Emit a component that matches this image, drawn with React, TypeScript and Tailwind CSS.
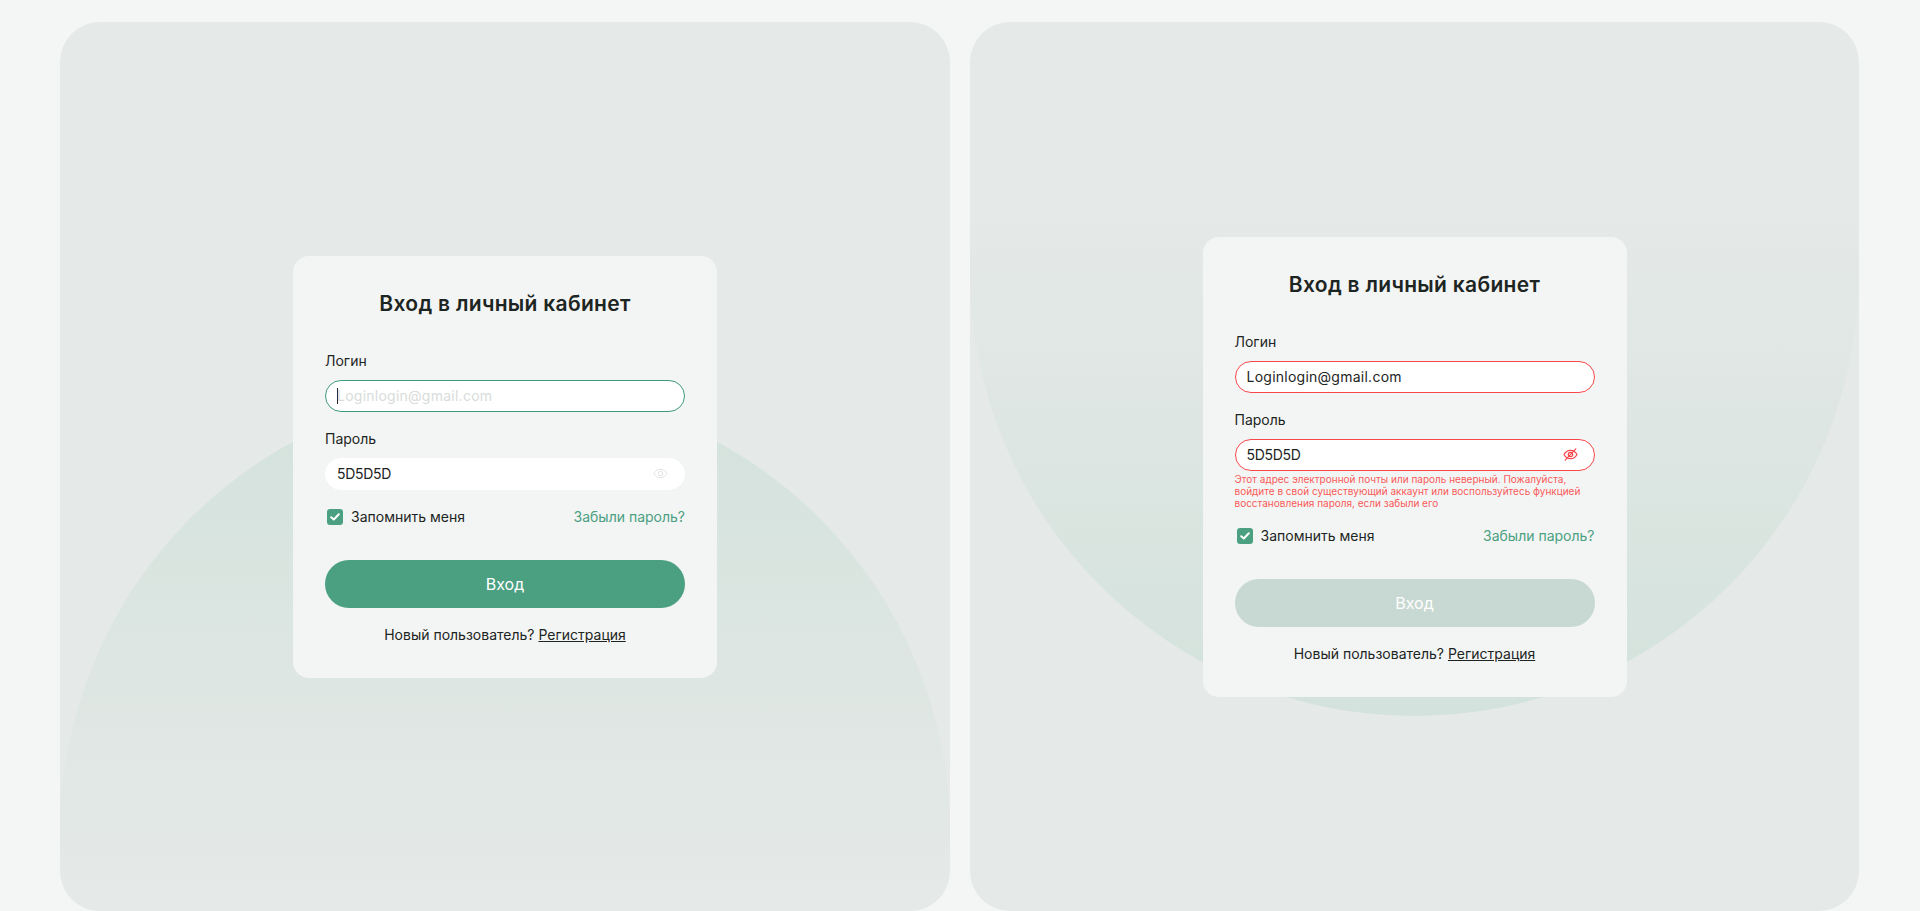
const font = { fontFamily: 'Inter, sans-serif' };

function EyeIcon({ off }: { off?: boolean }) {
  const color = off ? '#f7474b' : '#dfe3e1';
  return (
    <svg width="15" height="15" viewBox="0 0 15 15" fill="none" stroke={color} strokeWidth={off ? 1.2 : 1}>
      <path d="M1 7.500c1.500-2.800 3.700-4.200 6.500-4.200s5 1.400 6.500 4.200c-1.500 2.800-3.700 4.200-6.500 4.200S2.500 10.300 1 7.500Z" />
      <circle cx="7.500" cy="7.500" r="2.200" />
      {off && <path d="M12.800 1.800 2.200 13.200" strokeLinecap="round" />}
    </svg>
  );
}

function Check() {
  return (
    <span className="flex h-4 w-4 items-center justify-center rounded-[3px] bg-[#4ba082]">
      <svg width="10" height="8" viewBox="0 0 10 8" fill="none" stroke="#fff" strokeWidth="2" strokeLinecap="round" strokeLinejoin="round">
        <path d="M1.200 4.200 3.800 6.500 8.800 1.300" />
      </svg>
    </span>
  );
}

function LoginCard({ error }: { error?: boolean }) {
  return (
    <div className="relative flex w-[424px] flex-col rounded-2xl bg-[#f3f5f4] px-8 pt-[34px] pb-[33px] text-[#1d2523]">
      <h1 className="text-center text-[21px] leading-7 font-semibold tracking-[0.3px]">Вход в личный кабинет</h1>

      <label className="mt-[33px] text-[14px] leading-5">Логин</label>
      <div
        className={
          'mt-[9px] flex h-8 items-center rounded-full border bg-white px-[11px] text-[14px] tracking-[0.25px] ' +
          (error ? 'border-[#f7474b]' : 'border-[#3f9a7a]')
        }
      >
        {error ? (
          <span>Loginlogin@gmail.com</span>
        ) : (
          <>
            <span className="h-4 w-px bg-[#1d2523]" />
            <span className="-ml-px text-[#d8dcda]">Loginlogin@gmail.com</span>
          </>
        )}
      </div>

      <label className="mt-[17px] text-[14px] leading-5">Пароль</label>
      <div
        className={
          'mt-[9px] flex h-8 items-center justify-between rounded-full border bg-white pr-4 pl-[11px] text-[14px] ' +
          (error ? 'border-[#f7474b]' : 'border-white')
        }
      >
        <span className="tracking-[-0.3px]">5D5D5D</span>
        <EyeIcon off={error} />
      </div>
      {error && (
        <p className="mt-[2px] text-[10px] leading-3 text-[#f95a5a]">
          Этот адрес электронной почты или пароль неверный. Пожалуйста, войдите в свой существующий аккаунт или воспользуйтесь функцией восстановления пароля, если забыли его
        </p>
      )}

      <div className="mt-[17px] flex h-5 items-center justify-between text-[14px]">
        <span className="flex items-center gap-2 pl-[2px]">
          <Check />
          Запомнить меня
        </span>
        <a className="text-[#4ba082]">Забыли пароль?</a>
      </div>

      <button
        className={
          'mt-[33px] h-12 rounded-full text-[16px] text-white ' +
          (error ? 'bg-[#c8d8d2]' : 'bg-[#4ba082]')
        }
      >
        Вход
      </button>

      <p className="mt-[17px] text-center text-[14px] leading-5">
        Новый пользователь? <a className="underline">Регистрация</a>
      </p>
    </div>
  );
}

export default function App() {
  return (
    <div className="flex h-[911px] gap-5 overflow-hidden bg-[#f4f6f5] pt-[22px] pl-[60px]" style={font}>
      <section className="relative flex h-[889px] w-[890px] items-center justify-center overflow-hidden rounded-[40px] bg-[#e5e9e7]">
        <div className="absolute top-[366px] left-0 h-[890px] w-[890px] rounded-full bg-gradient-to-b from-[#d3e2dc] from-0% to-[#e5e9e7] to-[56%]" />
        <LoginCard />
      </section>
      <section className="relative flex h-[889px] w-[889px] items-center justify-center overflow-hidden rounded-[40px] bg-[#e5e9e7]">
        <div className="absolute top-[-196px] left-0 h-[890px] w-[889px] rounded-full bg-gradient-to-t from-[#d3e2dc] from-0% to-[#e5e9e7] to-[56%]" />
        <LoginCard error />
      </section>
    </div>
  );
}
